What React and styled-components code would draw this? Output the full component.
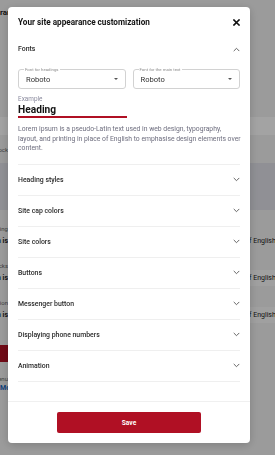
import React from "react";
import styled, { createGlobalStyle } from "styled-components";

const GlobalStyle = createGlobalStyle`
  * { box-sizing: border-box; }
  html, body { margin: 0; padding: 0; }
  body {
    font-family: Roboto, "Noto Sans", Arial, sans-serif;
    background: #f2f2f2;
    overflow: hidden;
  }
`;

/* ---------- page behind the dialog ---------- */

const Page = styled.div`
  width: 275px;
  height: 455px;
  display: flex;
  flex-direction: column;
  background: #f2f2f2;
  color: #222;
  overflow: hidden;
`;

const BgRow = styled.div`
  display: grid;
  grid-template-columns: 8px 1fr 26px;
  align-items: center;
  height: ${(p) => p.$h}px;
  margin-top: ${(p) => p.$mt || 0}px;
  background: ${(p) => p.$bg || "transparent"};
`;

const BgCell = styled.div`
  display: flex;
  justify-content: ${(p) => (p.$end ? "flex-end" : "flex-start")};
  align-items: center;
  height: 100%;
  overflow: hidden;
  white-space: nowrap;
  font-size: ${(p) => p.$size || 7}px;
  font-weight: ${(p) => (p.$bold ? 700 : 400)};
  color: ${(p) => p.$color || "#222"};
  background: ${(p) => p.$bg || "transparent"};
`;

const BgButton = styled.div`
  height: 17px;
  margin-top: 22px;
  width: 40px;
  background: #b01024;
`;

/* ---------- dialog ---------- */

const Overlay = styled.div`
  position: fixed;
  inset: 0;
  background: rgba(0, 0, 0, 0.36);
`;

const Modal = styled.div`
  position: absolute;
  left: 8px;
  top: 7px;
  width: 242px;
  height: 436px;
  background: #fff;
  border-radius: 4px;
  box-shadow: 0 2px 10px rgba(0, 0, 0, 0.18);
  display: flex;
  flex-direction: column;
  overflow: hidden;
`;

const Header = styled.div`
  height: 27px;
  padding: 8px 10px 5px;
  display: flex;
  justify-content: space-between;
  align-items: center;
`;

const Title = styled.h2`
  margin: 0;
  font-size: 8.2px;
  line-height: 14px;
  font-weight: 700;
  color: #141414;
`;

const CloseButton = styled.button`
  border: 0;
  padding: 0;
  background: none;
  width: 8px;
  height: 8px;
  display: flex;
  align-items: center;
  justify-content: center;
  cursor: pointer;
`;

const Body = styled.div`
  flex: 1;
  padding: 0 10px;
  overflow: hidden;
`;

const Section = styled.div`
  border-bottom: 1px solid #efefef;
`;

const SectionHead = styled.div`
  height: 30px;
  display: flex;
  justify-content: space-between;
  align-items: center;
  font-size: 6.9px;
  font-weight: 500;
  color: #2b2b2b;
`;

const Panel = styled.div`
  padding: 5px 0 10px;
`;

const SelectGrid = styled.div`
  display: grid;
  grid-template-columns: 1fr 1fr;
  gap: 7px;
`;

const SelectBox = styled.div`
  position: relative;
  height: 20px;
  border: 1px solid #d2d2d2;
  border-radius: 3px;
  padding: 0 7px;
  display: flex;
  justify-content: space-between;
  align-items: center;
  font-size: 7.6px;
  color: #333;
`;

const FloatLabel = styled.span`
  position: absolute;
  top: -3px;
  left: 5px;
  padding: 0 1px;
  background: #fff;
  font-size: 4.3px;
  line-height: 5px;
  color: #8c8c8c;
`;

const Caret = styled.span`
  width: 0;
  height: 0;
  border-left: 2.2px solid transparent;
  border-right: 2.2px solid transparent;
  border-top: 2.4px solid #555;
`;

const ExampleLabel = styled.div`
  margin-top: 6px;
  font-size: 6.4px;
  line-height: 8px;
  color: #8b8b9e;
`;

const ExampleHeading = styled.div`
  font-size: 10.2px;
  line-height: 13px;
  font-weight: 700;
  color: #141414;
`;

const HeadingRule = styled.div`
  width: 109px;
  height: 2px;
  background: #b01024;
`;

const Lorem = styled.p`
  margin: 7px -4px 0 0;
  font-size: 6.8px;
  line-height: 9.5px;
  color: #6d6d7e;
`;

const Footer = styled.div`
  border-top: 1px solid #f0f0f0;
  padding: 10px 0;
  display: flex;
  justify-content: center;
`;

const SaveButton = styled.button`
  width: 144px;
  height: 21px;
  border: 0;
  border-radius: 2px;
  background: #b01024;
  color: #fff;
  font-family: inherit;
  font-size: 6.6px;
  font-weight: 700;
  cursor: pointer;
`;

const Chevron = ({ up }) => (
  <svg width="7" height="5" viewBox="0 0 7 5" fill="none">
    <path
      d={up ? "M1 3.8L3.5 1.3L6 3.8" : "M1 1.2L3.5 3.7L6 1.2"}
      stroke="#555"
      strokeWidth="0.9"
      strokeLinecap="round"
      strokeLinejoin="round"
    />
  </svg>
);

const sections = [
  "Heading styles",
  "Site cap colors",
  "Site colors",
  "Buttons",
  "Messenger button",
  "Displaying phone numbers",
  "Animation",
];

const fields = [
  { label: "Heading", hl: false },
  { label: "Subtitle blocks", hl: true },
  { label: "Description", hl: true },
];

export default function App() {
  return (
    <>
      <GlobalStyle />
      <Page>
        <BgRow $h={25}>
          <BgCell $bold $size={8}>rar</BgCell>
        </BgRow>
        <BgRow $h={18} $mt={92} $bg="#ffffff" />
        <BgRow $h={28}>
          <BgCell $end $size={6} $color="#666">Text block</BgCell>
        </BgRow>
        <BgRow $h={47} $bg="#e1e2e9" />
        {fields.map((f, i) => (
          <React.Fragment key={f.label}>
            <BgRow $h={8} $mt={i === 0 ? 14 : 12}>
              <BgCell $end $size={6} $color="#666">{f.label}</BgCell>
            </BgRow>
            <BgRow $h={16} $mt={1}>
              <BgCell $end $bold $size={7}>Lorem ipsum is</BgCell>
              <span />
              <BgCell $size={7} $bg={f.hl ? "#fafafa" : "transparent"}>
                f English to emphasise
              </BgCell>
            </BgRow>
          </React.Fragment>
        ))}
        <BgButton />
        <BgRow $h={8} $mt={12}>
          <BgCell $end $size={6} $color="#666">Menu</BgCell>
        </BgRow>
        <BgRow $h={12}>
          <BgCell $bold $size={7} $color="#1565c0">Mo</BgCell>
        </BgRow>
      </Page>

      <Overlay>
        <Modal>
          <Header>
            <Title>Your site appearance customization</Title>
            <CloseButton aria-label="Close">
              <svg width="7" height="7" viewBox="0 0 7 7">
                <path
                  d="M1 1L6 6M6 1L1 6"
                  stroke="#111"
                  strokeWidth="1.6"
                  strokeLinecap="square"
                />
              </svg>
            </CloseButton>
          </Header>

          <Body>
            <Section>
              <SectionHead>
                Fonts
                <Chevron up />
              </SectionHead>
              <Panel>
                <SelectGrid>
                  <SelectBox>
                    <FloatLabel>Font for headings</FloatLabel>
                    Roboto
                    <Caret />
                  </SelectBox>
                  <SelectBox>
                    <FloatLabel>Font for the main text</FloatLabel>
                    Roboto
                    <Caret />
                  </SelectBox>
                </SelectGrid>
                <ExampleLabel>Example</ExampleLabel>
                <ExampleHeading>Heading</ExampleHeading>
                <HeadingRule />
                <Lorem>
                  Lorem ipsum is a pseudo-Latin text used in web design,
                  typography,
                  <br />
                  layout, and printing in place of English to emphasise design
                  elements over content.
                </Lorem>
              </Panel>
            </Section>
            {sections.map((s) => (
              <Section key={s}>
                <SectionHead>
                  {s}
                  <Chevron />
                </SectionHead>
              </Section>
            ))}
          </Body>

          <Footer>
            <SaveButton>Save</SaveButton>
          </Footer>
        </Modal>
      </Overlay>
    </>
  );
}
